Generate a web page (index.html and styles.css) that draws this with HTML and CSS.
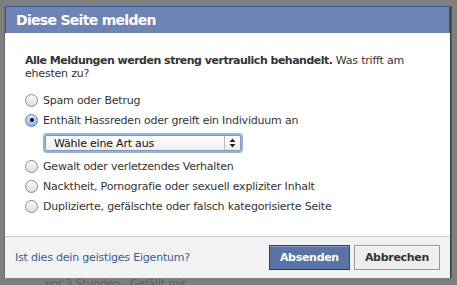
FILE: index.html
```html
<!DOCTYPE html>
<html>
<head>
<meta charset="utf-8">
<link rel="stylesheet" href="styles.css">
</head>
<body>
<div class="backdrop">
  <div class="dialog">
    <div class="header">Diese Seite melden</div>
    <div class="content">
      <p class="intro"><b>Alle Meldungen werden streng vertraulich behandelt.</b> Was trifft am ehesten zu?</p>
      <ul class="options">
        <li><span class="radio"></span>Spam oder Betrug</li>
        <li><span class="radio checked"></span>Enthält Hassreden oder greift ein Individuum an</li>
        <li class="select-row"><div class="select"><span>Wähle eine Art aus</span><span class="arrows"><svg width="7" height="10" viewBox="0 0 7 10"><path d="M3.5 0.5 L6.5 4 L0.5 4 Z M0.5 6 L6.5 6 L3.5 9.5 Z" fill="#222"/></svg></span></div></li>
        <li><span class="radio"></span>Gewalt oder verletzendes Verhalten</li>
        <li><span class="radio"></span>Nacktheit, Pornografie oder sexuell expliziter Inhalt</li>
        <li><span class="radio"></span>Duplizierte, gefälschte oder falsch kategorisierte Seite</li>
      </ul>
    </div>
    <div class="footer">
      <a class="link" href="#">Ist dies dein geistiges Eigentum?</a>
      <div class="buttons">
        <button class="btn primary">Absenden</button>
        <button class="btn">Abbrechen</button>
      </div>
    </div>
  </div>
  <div class="behind">vor 3 Stunden · Gefällt mir</div>
</div>
</body>
</html>
```
FILE: styles.css
```css
html, body {
  margin: 0;
  padding: 0;
  background: #7f7f7f;
  font-family: "DejaVu Sans", "Lucida Grande", sans-serif;
  font-size: 11px;
  letter-spacing: -0.2px;
  color: #333;
  overflow: hidden;
}
b {
  letter-spacing: -0.5px;
}
.backdrop {
  width: 457px;
  height: 285px;
  padding: 6px 0 0 5px;
  box-sizing: border-box;
}
.dialog {
  width: 445px;
  background: #fff;
  box-shadow: -1px 0 0 #6a6a6a, 1px 0 0 #3a3a3a, 2px 0 0 #5a5a5a;
}
.header {
  height: 26px;
  background: #6d84b4;
  border: 1px solid #3b5998;
  border-bottom: none;
  color: #fff;
  font-weight: bold;
  font-size: 14px;
  letter-spacing: -0.7px;
  line-height: 26px;
  padding-left: 10px;
}
.content {
  padding: 21px 20px 20px 20px;
}
.intro {
  margin: 0 0 10px 0;
  line-height: 13px;
}
.options {
  list-style: none;
  margin: 0;
  padding: 0;
}
.options li {
  display: flex;
  align-items: center;
  height: 20px;
}
.radio {
  width: 13px;
  height: 13px;
  border-radius: 50%;
  border: 1px solid #8a8a8a;
  background: linear-gradient(#fdfdfd, #dcdcdc);
  box-sizing: border-box;
  margin: 0 5px 0 0;
  position: relative;
  flex: none;
}
.radio.checked {
  border-color: #5a7fb5;
  background: linear-gradient(#d6e6f8, #8cb4e4);
}
.radio.checked::after {
  content: "";
  position: absolute;
  left: 3.5px;
  top: 3.5px;
  width: 4px;
  height: 4px;
  border-radius: 50%;
  background: #111;
}
.options li.select-row {
  height: 26px;
  padding-left: 20px;
}
.select {
  width: 196px;
  height: 16px;
  border: 1px solid #8a96a8;
  border-radius: 2px;
  box-shadow: 0 0 0 2px #8fb3e6;
  background: linear-gradient(#ffffff, #eeeeee);
  display: flex;
  align-items: center;
  justify-content: space-between;
  padding-left: 8px;
  box-sizing: border-box;
  font-size: 11px;
  color: #111;
}
.arrows {
  width: 15px;
  height: 100%;
  border-left: 1px solid #bbb;
  display: flex;
  align-items: center;
  justify-content: center;
}
.footer {
  background: #f2f2f2;
  border-top: 1px solid #ccc;
  height: 41px;
  display: flex;
  align-items: center;
  justify-content: space-between;
  padding: 0 10px;
}
.link {
  color: #3b5998;
  text-decoration: none;
}
.buttons {
  display: flex;
  gap: 4px;
}
.btn {
  font-family: inherit;
  font-weight: bold;
  font-size: 11px;
  letter-spacing: -0.3px;
  height: 25px;
  padding: 0 10px;
  border: 1px solid #999;
  background: #eee;
  color: #333;
  box-shadow: inset 0 1px 0 #fff;
}
.btn.primary {
  background: #5b74a8;
  border-color: #29447e #29447e #1a356e;
  color: #fff;
  box-shadow: inset 0 1px 0 #8a9cc2;
}
.behind {
  color: #5e5e5e;
  padding-left: 40px;
  margin-top: -1px;
}
```
